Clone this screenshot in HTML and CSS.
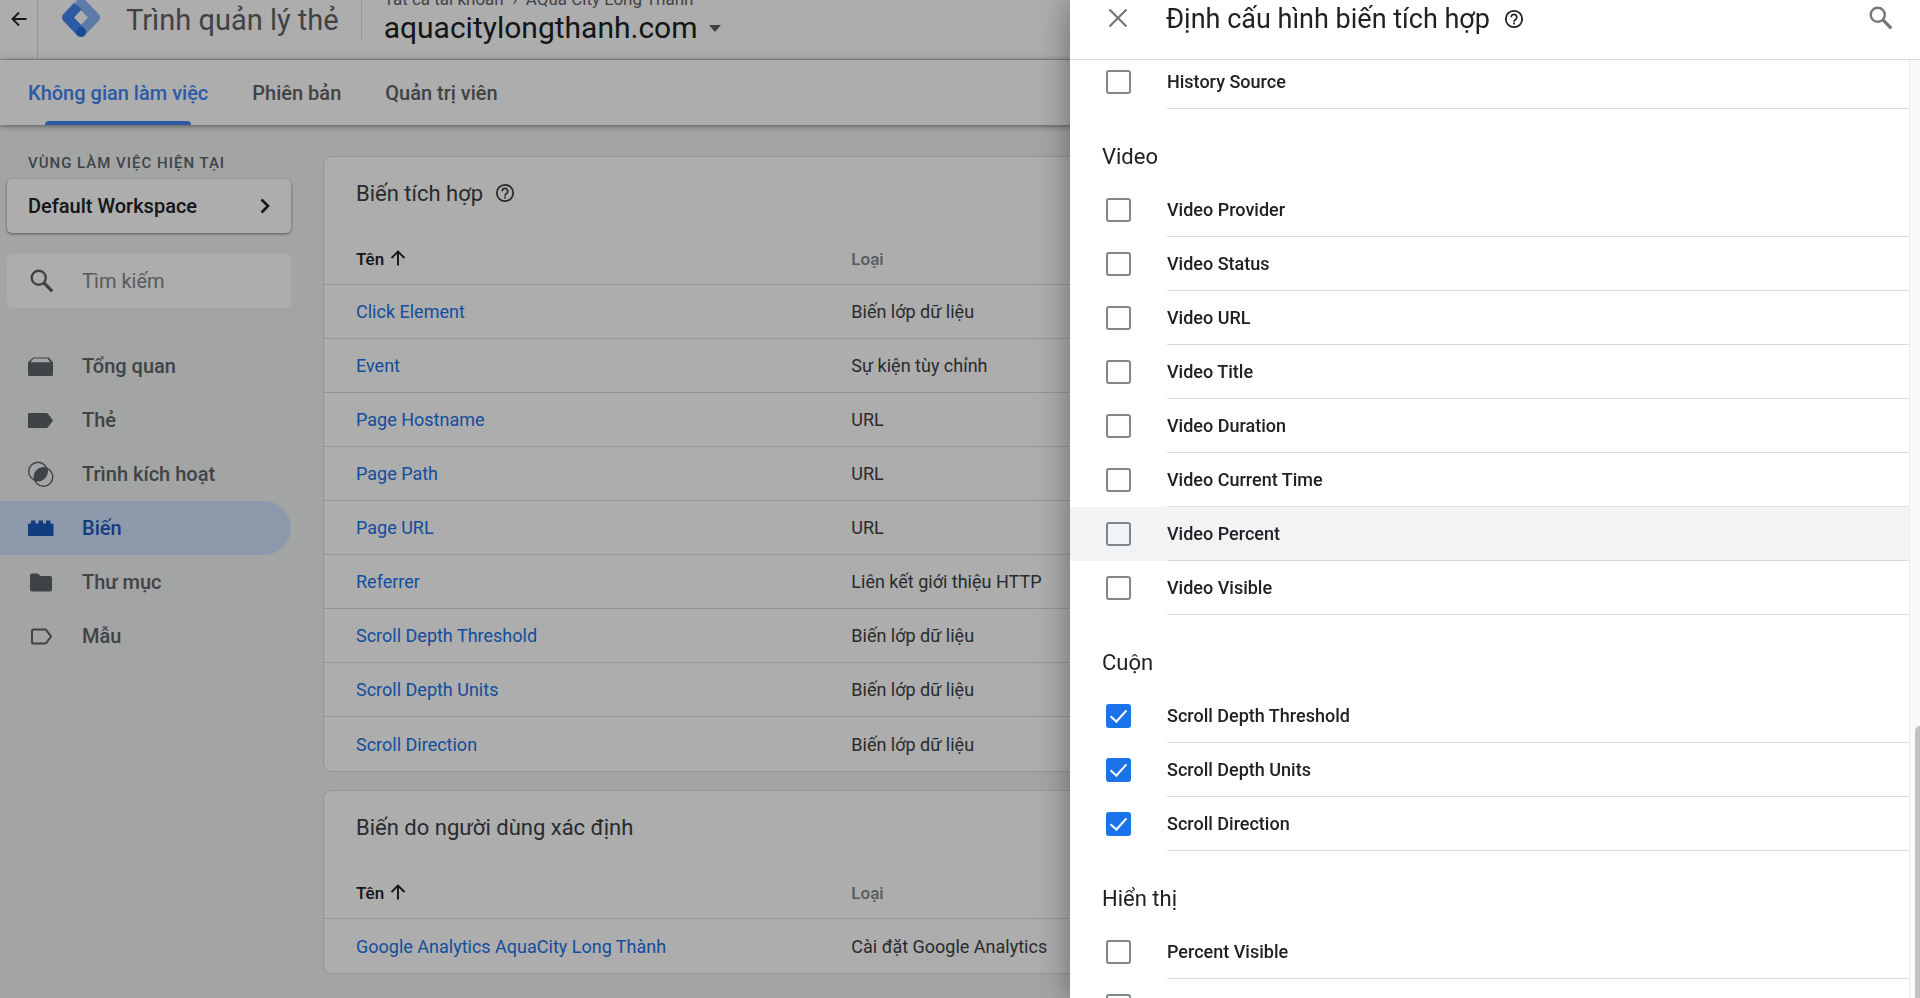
FILE: index.html
```html
<!DOCTYPE html>
<html lang="vi">
<head>
    <meta charset="utf-8">
    <title>Trình quản lý thẻ</title>
    <link rel="stylesheet" href="styles.css">
</head>
<body>
    <svg class="symbols" width="0" height="0">
        <symbol id="icon-search" viewBox="0 0 24 24">
            <circle cx="9" cy="9" r="6.5" fill="none" stroke="currentColor" stroke-width="2.2"/>
            <path d="M13.8 13.8L21.5 21.5" fill="none" stroke="currentColor" stroke-width="3"/>
        </symbol>
        <symbol id="icon-help" viewBox="0 0 20 20">
            <circle cx="10" cy="10" r="8.2" fill="none" stroke="currentColor" stroke-width="1.8"/>
            <path d="M7.2 8.2a2.8 2.8 0 1 1 4.6 2.1c-1 .8-1.8 1.2-1.8 2.4" fill="none" stroke="currentColor" stroke-width="1.7"/>
            <rect x="9.1" y="13.6" width="1.8" height="1.8" fill="currentColor"/>
        </symbol>
        <symbol id="icon-up" viewBox="0 0 16 16">
            <path d="M8 15.5V1.5M1.5 8L8 1.5L14.5 8" fill="none" stroke="currentColor" stroke-width="1.9"/>
        </symbol>
    </svg>

    <div class="app">
        <header class="header">
            <button class="back" aria-label="Quay lại">
                <svg width="16" height="16" viewBox="0 0 16 16">
                    <path d="M15.5 8H2M8 1.5L1.5 8L8 14.5" fill="none" stroke="currentColor" stroke-width="1.8"/>
                </svg>
            </button>
            <svg class="logo" width="40" height="42" viewBox="0 0 40 42">
                <path d="M19 7L33 21.5L19 36" fill="none" stroke="#8ab4f8" stroke-width="10" stroke-linejoin="round" stroke-linecap="round"/>
                <path d="M16 10L5 21.5L19 36" fill="none" stroke="#4285f4" stroke-width="10" stroke-linejoin="round"/>
                <circle cx="19" cy="36" r="5" fill="#246fdb"/>
            </svg>
            <div class="product">Trình quản lý thẻ</div>
            <div class="account">
                <div class="breadcrumb">Tất cả tài khoản &nbsp;›&nbsp; AQua City Long Thành</div>
                <button class="container-name">aquacitylongthanh.com <span class="caret"></span></button>
            </div>
        </header>

        <nav class="tabs">
            <a class="tab active" href="#">Không gian làm việc</a>
            <a class="tab" href="#">Phiên bản</a>
            <a class="tab" href="#">Quản trị viên</a>
        </nav>

        <div class="content">
            <aside class="sidebar">
                <div class="workspace-label">VÙNG LÀM VIỆC HIỆN TẠI</div>
                <button class="workspace">
                    Default Workspace
                    <svg width="10" height="16" viewBox="0 0 10 16">
                        <path d="M1.5 1.5L8 8L1.5 14.5" fill="none" stroke="currentColor" stroke-width="2.6"/>
                    </svg>
                </button>
                <div class="search">
                    <svg class="search-icon" width="26" height="26"><use href="#icon-search"/></svg>
                    <input class="search-field" type="text" placeholder="Tìm kiếm" aria-label="Tìm kiếm">
                </div>
                <nav class="menu">
                    <a class="menu-item" href="#">
                        <svg class="menu-icon" viewBox="0 0 26 26"><path d="M5 4.5H21L25 9.5V21.5a1.5 1.5 0 0 1-1.5 1.5H1.5A1.5 1.5 0 0 1 0 21.5V9.5zM5.5 5.600L2.5 9.300H22.5L19.5 5.600z" fill="currentColor" fill-rule="evenodd"/></svg>
                        Tổng quan
                    </a>
                    <a class="menu-item" href="#">
                        <svg class="menu-icon" viewBox="0 0 26 26"><path d="M1 6H18.5a2 2 0 0 1 1.5.7L25 13.5L20 20.3a2 2 0 0 1-1.5.7H1a1 1 0 0 1-1-1V7a1 1 0 0 1 1-1z" fill="currentColor"/></svg>
                        Thẻ
                    </a>
                    <a class="menu-item" href="#">
                        <svg class="menu-icon" viewBox="0 0 26 26">
                            <circle cx="10" cy="10.5" r="9.3" fill="none" stroke="currentColor" stroke-width="1.4"/>
                            <circle cx="15.5" cy="16" r="9.3" fill="none" stroke="currentColor" stroke-width="1.4"/>
                            <path d="M18.7 7.3A9.3 9.3 0 0 1 6.8 19.2A9.3 9.3 0 0 1 18.7 7.3z" fill="currentColor"/>
                        </svg>
                        Trình kích hoạt
                    </a>
                    <a class="menu-item selected" href="#">
                        <svg class="menu-icon" viewBox="0 0 26 26"><path d="M1 8.5H3V5.5H7.5V8.5H10.5V5.5H15V8.5H18V5.5H22.5V8.5H24.5a1 1 0 0 1 1 1V20a1 1 0 0 1-1 1H1a1 1 0 0 1-1-1V9.5a1 1 0 0 1 1-1z" fill="currentColor"/></svg>
                        Biến
                    </a>
                    <a class="menu-item" href="#">
                        <svg class="menu-icon" viewBox="0 0 26 26"><path d="M4 4.5H10L12.5 7H22a2 2 0 0 1 2 2V20.5a2 2 0 0 1-2 2H4a2 2 0 0 1-2-2V6.5a2 2 0 0 1 2-2z" fill="currentColor"/></svg>
                        Thư mục
                    </a>
                    <a class="menu-item" href="#">
                        <svg class="menu-icon" viewBox="0 0 26 26"><path d="M5.5 6.5H17a2 2 0 0 1 1.5.8L23 13.5L18.5 19.7a2 2 0 0 1-1.5.8H5.5a1.5 1.5 0 0 1-1.5-1.5V8a1.5 1.5 0 0 1 1.5-1.5z" fill="none" stroke="currentColor" stroke-width="2"/></svg>
                        Mẫu
                    </a>
                </nav>
            </aside>

            <main class="main">
                <section class="card">
                    <h2 class="section-title">Biến tích hợp <svg width="20" height="20"><use href="#icon-help"/></svg></h2>
                    <table class="variables">
                        <thead>
                            <tr><th class="sorted">Tên <svg width="16" height="16"><use href="#icon-up"/></svg></th><th>Loại</th><th></th></tr>
                        </thead>
                        <tbody>
                            <tr><td><a href="#">Click Element</a></td><td>Biến lớp dữ liệu</td><td></td></tr>
                            <tr><td><a href="#">Event</a></td><td>Sự kiện tùy chỉnh</td><td></td></tr>
                            <tr><td><a href="#">Page Hostname</a></td><td>URL</td><td></td></tr>
                            <tr><td><a href="#">Page Path</a></td><td>URL</td><td></td></tr>
                            <tr><td><a href="#">Page URL</a></td><td>URL</td><td></td></tr>
                            <tr><td><a href="#">Referrer</a></td><td>Liên kết giới thiệu HTTP</td><td></td></tr>
                            <tr><td><a href="#">Scroll Depth Threshold</a></td><td>Biến lớp dữ liệu</td><td></td></tr>
                            <tr><td><a href="#">Scroll Depth Units</a></td><td>Biến lớp dữ liệu</td><td></td></tr>
                            <tr><td><a href="#">Scroll Direction</a></td><td>Biến lớp dữ liệu</td><td></td></tr>
                        </tbody>
                    </table>
                </section>

                <section class="card">
                    <h2 class="section-title">Biến do người dùng xác định</h2>
                    <table class="variables">
                        <thead>
                            <tr><th class="sorted">Tên <svg width="16" height="16"><use href="#icon-up"/></svg></th><th>Loại</th><th></th></tr>
                        </thead>
                        <tbody>
                            <tr><td><a href="#">Google Analytics AquaCity Long Thành</a></td><td>Cài đặt Google Analytics</td><td></td></tr>
                        </tbody>
                    </table>
                </section>
            </main>
        </div>
    </div>

    <div class="scrim"></div>

    <div class="drawer">
        <div class="drawer-header">
            <button class="icon-button" aria-label="Đóng">
                <svg width="20" height="20" viewBox="0 0 20 20">
                    <path d="M1.5 1.5L18.5 18.5M18.5 1.5L1.5 18.5" fill="none" stroke="currentColor" stroke-width="2.2"/>
                </svg>
            </button>
            <h1 class="drawer-title">Định cấu hình biến tích hợp <svg width="20" height="20"><use href="#icon-help"/></svg></h1>
            <button class="icon-button" aria-label="Tìm kiếm">
                <svg width="26" height="26"><use href="#icon-search"/></svg>
            </button>
        </div>
        <div class="drawer-body">
            <div class="options">
                <label class="option"><input type="checkbox"><span>History Source</span></label>

                <h2 class="group-title">Video</h2>
                <label class="option"><input type="checkbox"><span>Video Provider</span></label>
                <label class="option"><input type="checkbox"><span>Video Status</span></label>
                <label class="option"><input type="checkbox"><span>Video URL</span></label>
                <label class="option"><input type="checkbox"><span>Video Title</span></label>
                <label class="option"><input type="checkbox"><span>Video Duration</span></label>
                <label class="option"><input type="checkbox"><span>Video Current Time</span></label>
                <label class="option hovered"><input type="checkbox"><span>Video Percent</span></label>
                <label class="option"><input type="checkbox"><span>Video Visible</span></label>

                <h2 class="group-title">Cuộn</h2>
                <label class="option"><input type="checkbox" checked><span>Scroll Depth Threshold</span></label>
                <label class="option"><input type="checkbox" checked><span>Scroll Depth Units</span></label>
                <label class="option"><input type="checkbox" checked><span>Scroll Direction</span></label>

                <h2 class="group-title">Hiển thị</h2>
                <label class="option"><input type="checkbox"><span>Percent Visible</span></label>
                <label class="option"><input type="checkbox"><span></span></label>
            </div>
            <div class="scrollbar"><div class="thumb"></div></div>
        </div>
    </div>
</body>
</html>
```
FILE: styles.css
```css
* {
    box-sizing: border-box;
}

body {
    margin: 0;
    height: 100vh;
    overflow: hidden;
    background-color: #f1f3f4;
    color: #3c4043;
    font-family: Roboto, "Noto Sans", sans-serif;
    font-size: 18px;
}

a {
    color: #1a73e8;
    text-decoration: none;
}

button {
    border: none;
    background: none;
    padding: 0;
    color: inherit;
    font: inherit;
    cursor: pointer;
}

.symbols {
    position: absolute;
}

/* header, scrolled a little under the top edge */
.header {
    display: flex;
    align-items: center;
    height: 80px;
    margin-top: -20px;
    background-color: #fff;
    border-bottom: 1px solid #dadce0;
}

.back {
    display: flex;
    align-items: center;
    justify-content: center;
    width: 38px;
    height: 100%;
    padding-bottom: 2px;
    border-right: 1px solid #dadce0;
    color: #202124;
}

.logo {
    margin: 0 24px 5px 24px;
}

.product {
    color: #5f6368;
    font-size: 29px;
    line-height: 40px;
    padding-right: 22px;
    margin-right: 22px;
    border-right: 1px solid #dadce0;
}

.account {
    padding-bottom: 3px;
    color: #5f6368;
}

.breadcrumb {
    font-size: 17px;
    line-height: 20px;
}

.container-name {
    display: flex;
    align-items: center;
    gap: 11px;
    color: #202124;
    font-size: 30px;
    line-height: 38px;
}

.caret {
    border: 6px solid transparent;
    border-top: 7px solid #5f6368;
    border-bottom: none;
}

.tabs {
    position: relative;
    display: flex;
    gap: 44px;
    height: 65px;
    padding: 0 28px;
    background-color: #fff;
    box-shadow: 0 1px 6px rgba(0, 0, 0, 0.5);
}

.tab {
    display: flex;
    flex-direction: column;
    justify-content: center;
    align-items: center;
    position: relative;
    color: #5f6368;
    font-size: 20px;
    font-weight: 500;
}

.tab.active {
    color: #4285f4;
}

.tab.active::after {
    content: "";
    position: absolute;
    left: 17px;
    right: 17px;
    bottom: 0;
    height: 4px;
    border-radius: 4px 4px 0 0;
    background-color: #4285f4;
}

.content {
    display: flex;
}

.sidebar {
    width: 291px;
    padding-top: 28px;
}

.workspace-label {
    padding-left: 28px;
    margin-bottom: 6px;
    color: #5f6368;
    font-size: 15px;
    font-weight: 500;
    line-height: 20px;
    letter-spacing: 1px;
}

.workspace {
    display: flex;
    align-items: center;
    justify-content: space-between;
    width: 284px;
    height: 54px;
    margin: 0 0 21px 7px;
    padding: 0 21px;
    border-radius: 5px;
    background-color: #fff;
    box-shadow: 0 1px 3px rgba(0, 0, 0, 0.5);
    color: #202124;
    font-size: 20px;
    font-weight: 500;
}

.search {
    display: flex;
    align-items: center;
    gap: 27px;
    height: 54px;
    margin: 0 0 31px 7px;
    padding: 0 22px;
    border-radius: 5px;
    background-color: #fff;
}

.search-icon {
    flex: none;
    color: #5f6368;
}

.search-field {
    width: 100%;
    padding: 0;
    border: none;
    outline: none;
    background: none;
    color: #3c4043;
    font: inherit;
    font-size: 20px;
}

.search-field::placeholder {
    color: #80868b;
}

.menu-item {
    display: flex;
    align-items: center;
    gap: 28px;
    height: 54px;
    padding-left: 28px;
    border-radius: 0 27px 27px 0;
    color: #5f6368;
    font-size: 20px;
    font-weight: 500;
}

.menu-icon {
    width: 26px;
    height: 26px;
}

.menu-item.selected {
    background-color: #d2e3fc;
    color: #185abc;
}

.main {
    flex: 1;
    padding: 31px 13px 24px 32px;
}

.card {
    margin-bottom: 18px;
    border: 1px solid #dadce0;
    border-radius: 9px;
    background-color: #fff;
}

.section-title {
    display: flex;
    align-items: center;
    gap: 12px;
    height: 74px;
    margin: 0;
    padding: 0 32px 2px;
    font-size: 22px;
    font-weight: 400;
}

.variables {
    width: 100%;
    border-collapse: separate;
    border-spacing: 0;
    table-layout: fixed;
}

.variables th,
.variables td {
    height: 54px;
    padding: 0 0 0 32px;
    text-align: left;
}

.variables th {
    padding-top: 2px;
    border-bottom: 1px solid #dadce0;
    color: #80868b;
    font-size: 17px;
    font-weight: 500;
}

.variables td {
    border-bottom: 1px solid #dadce0;
}

.variables tr:last-child td {
    border-bottom: none;
}

.variables th + th,
.variables td + td {
    padding-left: 0;
}

.variables th.sorted {
    color: #202124;
}

.variables th svg {
    margin-left: 2px;
    vertical-align: -1px;
}

.scrim {
    position: fixed;
    inset: 0;
    background-color: rgba(0, 0, 0, 0.32);
}

.drawer {
    position: fixed;
    top: 0;
    right: 0;
    bottom: 0;
    display: flex;
    flex-direction: column;
    width: 850px;
    max-width: 100%;
    background-color: #fff;
    box-shadow: 0 0 32px rgba(0, 0, 0, 0.4);
    color: #202124;
}

.drawer-header {
    position: relative;
    display: flex;
    align-items: center;
    flex: none;
    height: 60px;
    padding: 0 26px 24px 38px;
    border-bottom: 1px solid #dadce0;
    background-color: #fff;
}

.icon-button {
    display: flex;
    color: #757575;
}

.drawer-title {
    display: flex;
    align-items: center;
    gap: 14px;
    flex: 1;
    margin: 0 0 0 38px;
    padding-top: 2px;
    font-size: 27px;
    font-weight: 400;
}

.drawer-body {
    display: flex;
    flex: 1;
    overflow: hidden;
}

.options {
    flex: 1;
    margin-top: -5px;
}

.group-title {
    height: 74px;
    margin: 0;
    padding: 35px 0 0 32px;
    font-size: 22px;
    font-weight: 400;
    line-height: 26px;
}

.option {
    display: flex;
    align-items: center;
    gap: 36px;
    height: 54px;
    padding-left: 36px;
    font-weight: 500;
}

.option.hovered {
    background-color: #f1f3f4;
}

.option span {
    flex: 1;
    height: 54px;
    line-height: 53px;
    border-bottom: 1px solid #dadce0;
}

.option input {
    display: flex;
    align-items: center;
    justify-content: center;
    appearance: none;
    width: 25px;
    height: 24px;
    margin: 0;
    border: 2px solid #80868b;
    border-radius: 3px;
}

.option input:checked {
    border-color: #1a73e8;
    background-color: #1a73e8;
}

.option input:checked::after {
    content: "";
    width: 7px;
    height: 14px;
    margin-bottom: 4px;
    border: solid #fff;
    border-width: 0 2px 2px 0;
    transform: rotate(42deg);
}

.scrollbar {
    display: flex;
    flex-direction: column;
    justify-content: flex-end;
    width: 11px;
    padding-left: 5px;
    border-left: 1px solid #e8eaed;
    background-color: #fafafa;
}

.thumb {
    height: 29%;
    border-radius: 5px 0 0 0;
    background-color: #c1c1c1;
}
```
